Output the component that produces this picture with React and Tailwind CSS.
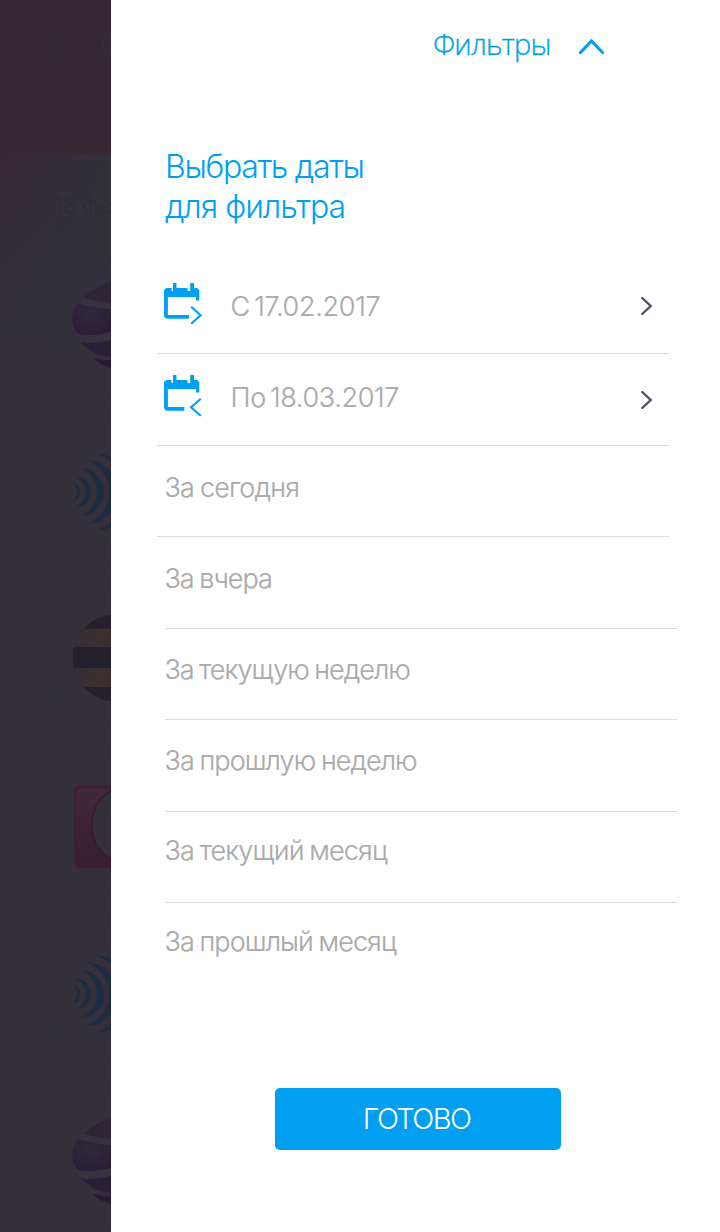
import React from "react";

const periods = [
  { label: "За сегодня", row: "h-[91px] pt-[25px] pl-2 border-b", text: "tracking-[-0.8px]" },
  { label: "За вчера", row: "h-[92px] pt-[25px] border-b ml-2 -mr-2", text: "tracking-[-1px]" },
  { label: "За текущую неделю", row: "h-[91px] pt-[24px] border-b ml-2 -mr-2", text: "tracking-[-1px]" },
  { label: "За прошлую неделю", row: "h-[92px] pt-[24px] border-b ml-2 -mr-2", text: "tracking-[-0.93px]" },
  { label: "За текущий месяц", row: "h-[91px] pt-[22px] border-b ml-2 -mr-2", text: "tracking-[-0.86px]" },
  { label: "За прошлый месяц", row: "h-[92px] pt-[22px] ml-2 -mr-2", text: "tracking-[-0.92px]" },
];

function CalendarIcon({ back = false }) {
  return (
    <svg width="40" height="44" viewBox="0 0 40 44" className="shrink-0" fill="none">
      <path
        fill="#009ff2"
        d="M3.500 6H8.500V9H10V1H13.500V6H24.500V9H27.200V1H31V6H34L36.300 8V18.500H33V15H4.700V32.700L5 34H1V8Z"
      />
      {back ? (
        <>
          <path d="M2.800 14V33Q2.800 34.900 4.800 34.900H21.300" stroke="#009ff2" strokeWidth="3.600" />
          <path d="M37.800 24.700L28 33.200L37.800 41.700" stroke="#009ff2" strokeWidth="2.100" />
        </>
      ) : (
        <>
          <path d="M2.800 14V33Q2.800 34.900 4.800 34.900H26" stroke="#009ff2" strokeWidth="3.600" />
          <path d="M28.200 24.700L37.600 33.200L28.200 41.700" stroke="#009ff2" strokeWidth="2.100" />
        </>
      )}
    </svg>
  );
}

function Chevron() {
  return (
    <svg width="14" height="20" viewBox="0 0 14 20" fill="none">
      <path d="M2.200 2L10.700 10L2.200 18" stroke="#4c5369" strokeWidth="2.400" strokeLinecap="round" />
    </svg>
  );
}

function Ball({ y }) {
  return (
    <g transform={`translate(0 ${y})`}>
      <path d="M116 -44Q97 -40 83 -27Q97 -23 116 -21.500Z" fill="#2d2437" />
      <path d="M83 -27Q97 -23 116 -21.500V-16Q95 -16 78 -22Z" fill="#363240" />
      <path d="M78 -22Q95 -16 116 -16V5Q100 11 86 10Q76 10 75 5Q68 -8 78 -22Z" fill="url(#ball)" />
      <path d="M75 5Q76 10 86 10Q100 11 116 5V13Q98 20 80.500 17Z" fill="#36323f" />
      <path d="M80.500 17Q98 20 116 13V31.500Q96 34 80.500 17Z" fill="#2a1f38" />
      <path d="M92.500 33Q103 36 116 35V44Q102 42 92.500 33Z" fill="#291b36" />
    </g>
  );
}

function Waves({ y }) {
  return (
    <g transform={`translate(0 ${y})`} fill="#1f2b40">
      <path d="M73 -10A10.600 10.600 0 0 1 73 10A14.500 14.500 0 0 0 73 -10Z" />
      <path d="M76 -15A15 15 0 0 1 76 15A16.500 16.500 0 0 0 76 -15Z" />
      <path d="M80 -24A24 24 0 0 1 80 24A25.500 25.500 0 0 0 80 -24Z" />
      <path d="M87 -31.500A31.500 31.500 0 0 1 87 31.500A33.500 33.500 0 0 0 87 -31.500Z" />
      <path d="M96 -38.500A38.500 38.500 0 0 1 96 38.500A40.500 40.500 0 0 0 96 -38.500Z" />
    </g>
  );
}

function Backdrop() {
  return (
    <svg width="111" height="1232" viewBox="0 0 111 1232" fill="none" className="block">
      <defs>
        <radialGradient id="ball" cx="0.4" cy="0.35" r="0.7">
          <stop offset="0" stopColor="#302a3b" />
          <stop offset="1" stopColor="#291d36" />
        </radialGradient>
        <linearGradient id="wash" gradientUnits="userSpaceOnUse" x1="0" y1="170" x2="90" y2="215">
          <stop offset="0" stopColor="#382834" />
          <stop offset="0.5" stopColor="#332d3a" />
          <stop offset="1" stopColor="#31303d" />
        </linearGradient>
        <linearGradient id="fade" x1="0" y1="0" x2="0" y2="1">
          <stop offset="0.2" stopColor="#33303c" stopOpacity="0" />
          <stop offset="1" stopColor="#33303c" />
        </linearGradient>
        <linearGradient id="card" x1="0" y1="0" x2="0" y2="1">
          <stop offset="0" stopColor="#3f2a3a" />
          <stop offset="1" stopColor="#3a1d2f" />
        </linearGradient>
        <linearGradient id="stripe" x1="0" y1="0" x2="1" y2="0">
          <stop offset="0" stopColor="#3a2e34" />
          <stop offset="0.3" stopColor="#382d33" />
          <stop offset="0.7" stopColor="#3e3030" />
          <stop offset="1" stopColor="#3b2e30" />
        </linearGradient>
        <clipPath id="disc">
          <circle cx="116" cy="658" r="43.500" />
        </clipPath>
      </defs>
      <rect width="111" height="1232" fill="#33303c" />
      <rect y="153" width="111" height="190" fill="url(#wash)" />
      <rect y="153" width="111" height="191" fill="url(#fade)" />
      <rect width="111" height="153" fill="#362733" />
      <path d="M60 34.500L47 46L60 58" stroke="#2f2e3b" strokeWidth="2" />
      <g stroke="#302e3d" strokeOpacity="0.8">
        {[325, 492, 658, 827, 994, 1161].map((y) => (
          <circle key={y} cx="116" cy={y} r="69" />
        ))}
        {[409, 577, 745, 913, 1080].map((y) => (
          <path key={y} d={`M29 ${y}.5H111`} />
        ))}
      </g>
      <Ball y={325} />
      <Waves y={492} />
      <g clipPath="url(#disc)">
        <rect x="72" y="614" width="40" height="90" fill="#24202d" />
        <rect x="72" y="629" width="40" height="18" fill="url(#stripe)" />
        <rect x="72" y="668" width="40" height="19" fill="url(#stripe)" />
      </g>
      <rect x="74" y="785" width="84" height="83.500" rx="6" fill="#40202f" />
      <rect x="77" y="789" width="84" height="78" rx="4" fill="url(#card)" />
      <ellipse cx="121" cy="825" rx="29" ry="36" fill="#33303c" stroke="#381a2d" strokeWidth="1.500" />
      <Waves y={994} />
      <Ball y={1161} />
    </svg>
  );
}

export default function App() {
  return (
    <div className="flex h-[1232px] w-[720px] overflow-hidden bg-white font-['Inter',sans-serif] font-light">
      <aside className="relative h-[1232px] w-[111px] shrink-0 overflow-hidden">
        <Backdrop />
        <span className="absolute top-[25px] left-[100px] text-[31px] leading-[40px] whitespace-nowrap text-[#2c303e]">О</span>
        <span className="absolute top-[190px] left-[53px] text-[24px] leading-[32px] tracking-[-0.5px] whitespace-nowrap text-[#2e2b38]">18 фев</span>
      </aside>

      <main className="flex flex-1 flex-col">
        <header className="flex h-[92px] items-center pl-[322px] text-[#00a1e4]">
          <span className="-mt-1 w-[144px] font-['Open_Sans',sans-serif] text-[29px] leading-[40px] tracking-[-0.75px] whitespace-nowrap [-webkit-text-stroke:0.3px]">Фильтры</span>
          <svg width="30" height="20" viewBox="0 0 30 20" fill="none">
            <path d="M3.500 16.500L14.500 5L25.500 16.500" stroke="currentColor" strokeWidth="3.200" strokeLinecap="round" />
          </svg>
        </header>

        <h1 className="h-[170px] pt-[55px] pl-[54px] text-[32px] leading-[40px] text-[#009ff2]">
          <span className="block tracking-[-1.3px]">Выбрать даты</span>
          <span className="block tracking-[-0.95px]">для фильтра</span>
        </h1>

        <div className="ml-[46px] w-[512px] text-[27px] leading-[34px] text-[#aaaaaa] [-webkit-text-stroke:0.2px]">
          <button className="flex h-[92px] w-full items-start border-b border-[#dadada] pl-1.5 text-left">
            <span className="pt-[20px]"><CalendarIcon /></span>
            <span className="flex-1 pt-[28px] pl-[27.5px] tracking-[-0.3px] [word-spacing:-3px]">С 17.02.2017</span>
            <span className="pt-[34px] pr-[15px]"><Chevron /></span>
          </button>
          <button className="flex h-[92px] w-full items-start border-b border-[#dadada] pl-1.5 text-left">
            <span className="pt-[20px]"><CalendarIcon back /></span>
            <span className="flex-1 pt-[27px] pl-[27.5px] tracking-[-0.35px] [word-spacing:-3px]">По 18.03.2017</span>
            <span className="pt-[36px] pr-[15px]"><Chevron /></span>
          </button>
          <ul>
            {periods.map((p) => (
              <li key={p.label} className={`border-[#dadada] ${p.row}`}>
                <span className={`-ml-[0.5px] [word-spacing:-1px] ${p.text}`}>{p.label}</span>
              </li>
            ))}
          </ul>
        </div>

        <button className="mt-[93px] ml-[164px] flex h-[62px] w-[286px] items-center justify-center rounded-[5px] bg-[#009ff2] pr-[3px] text-[29px] tracking-[-1.6px] text-white">
          ГОТОВО
        </button>
      </main>
    </div>
  );
}
